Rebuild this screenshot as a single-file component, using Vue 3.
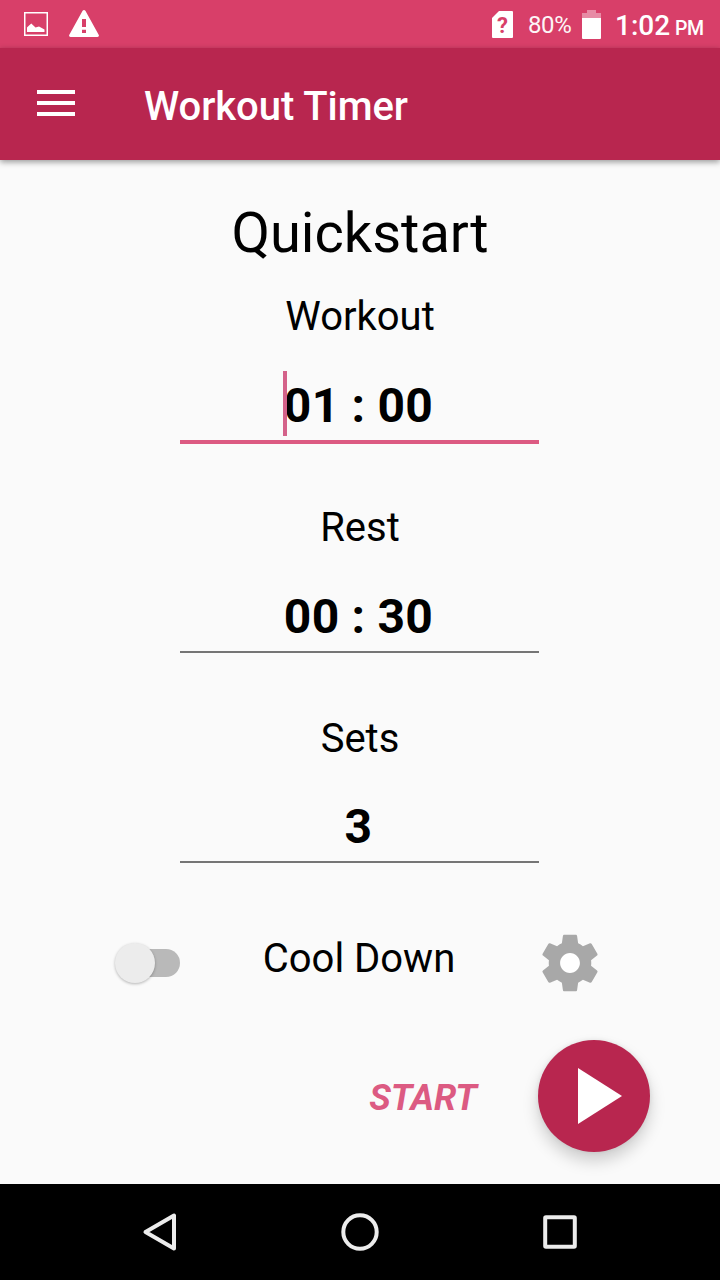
<template>
  <div class="screen">
    <header class="status">
      <svg class="st-image" viewBox="0 0 24 24">
        <rect x="0.75" y="0.75" width="22.5" height="22.5" />
        <path d="M3 20 V15.5 L4.5 14 L7.3 11.5 L11.5 15.5 L15 14.5 L20.5 17.5 V20 Z" />
      </svg>
      <svg class="st-warn" viewBox="0 0 30 27">
        <path
          d="M13.6 0.8 Q15 -0.6 16.4 0.8 L29.8 25 Q30.4 27 28.5 27 H1.5 Q-0.4 27 0.2 25 Z M13 9 V17 H17 V9 Z M13 19.8 V23 H17 V19.8 Z"
          fill-rule="evenodd"
        />
      </svg>
      <div class="st-sim">
        <svg viewBox="0 0 21 27">
          <path d="M7 0 H20 Q21 0 21 1 V26 Q21 27 20 27 H1 Q0 27 0 26 V7 Z" />
        </svg>
        <span>?</span>
      </div>
      <span class="st-pct">80%</span>
      <svg class="st-batt" viewBox="0 0 19 29">
        <path d="M5 0 H14 V3 H19 V8 H0 V3 H5 Z" opacity="0.4" />
        <path d="M0 8 H19 V28 Q19 29 18 29 H1 Q0 29 0 28 Z" />
      </svg>
      <span class="st-time">1:02</span>
      <span class="st-ampm">PM</span>
    </header>

    <nav class="appbar">
      <button class="burger" @click="menuOpen = !menuOpen">
        <i></i>
        <i></i>
        <i></i>
      </button>
      <h1>Workout Timer</h1>
    </nav>

    <main class="content">
      <h2>Quickstart</h2>

      <section
        v-for="f in fields"
        :key="f.label"
        class="field"
        :class="{ active: f.label === focused }"
        @click="focused = f.label"
      >
        <div class="label">{{ f.label }}</div>
        <div class="value">
          <span>{{ f.value }}</span>
        </div>
      </section>

      <div class="cooldown">
        <div class="switch" :class="{ on: coolDown }" @click="coolDown = !coolDown">
          <div class="track"></div>
          <div class="thumb"></div>
        </div>
        <div class="cool-label">Cool Down</div>
        <svg class="gear" viewBox="0 0 24 24">
          <circle cx="12" cy="12" r="4" fill="#fff" />
          <path
            fill="#a8a8a8"
            d="M19.43 12.98c.04-.32.07-.64.07-.98s-.03-.66-.07-.98l2.11-1.65c.19-.15.24-.42.12-.64l-2-3.46c-.12-.22-.39-.3-.61-.22l-2.49 1c-.52-.4-1.08-.73-1.69-.98l-.38-2.65C14.46 2.18 14.25 2 14 2h-4c-.25 0-.46.18-.49.42l-.38 2.65c-.61.25-1.17.59-1.69.98l-2.49-1c-.23-.09-.49 0-.61.22l-2 3.46c-.13.22-.07.49.12.64l2.11 1.65c-.04.32-.07.65-.07.98s.03.66.07.98l-2.11 1.65c-.19.15-.24.42-.12.64l2 3.46c.12.22.39.3.61.22l2.49-1c.52.4 1.08.73 1.69.98l.38 2.65c.03.24.24.42.49.42h4c.25 0 .46-.18.49-.42l.38-2.65c.61-.25 1.17-.59 1.69-.98l2.49 1c.23.09.49 0 .61-.22l2-3.46c.12-.22.07-.49-.12-.64l-2.11-1.65zM12 15.5c-1.93 0-3.5-1.57-3.5-3.5s1.57-3.5 3.5-3.5 3.5 1.57 3.5 3.5-1.57 3.5-3.5 3.5z"
          />
        </svg>
      </div>

      <div class="actions">
        <span class="start">START</span>
        <button class="fab">
          <svg viewBox="0 0 44 56">
            <path d="M0 0 L44 28 L0 56 Z" />
          </svg>
        </button>
      </div>
    </main>

    <footer class="navbar">
      <svg viewBox="0 0 40 40">
        <path d="M5.5 20 L34 3.5 V36.5 Z" />
      </svg>
      <svg viewBox="0 0 40 40">
        <circle cx="20" cy="20" r="16.7" />
      </svg>
      <svg viewBox="0 0 40 40">
        <rect x="5.2" y="5.2" width="29.6" height="29.6" rx="0.8" />
      </svg>
    </footer>
  </div>
</template>

<script setup>
import { ref } from 'vue'

const menuOpen = ref(false)
const coolDown = ref(false)
const focused = ref('Workout')

const fields = ref([
  { label: 'Workout', value: '01 : 00' },
  { label: 'Rest', value: '00 : 30' },
  { label: 'Sets', value: '3' },
])
</script>

<style>
body {
  margin: 0;
  background: #fafafa;
}
</style>

<style scoped>
.screen {
  width: 720px;
  height: 1280px;
  display: flex;
  flex-direction: column;
  overflow: hidden;
  background: #fafafa;
  color: #000;
  font-family: Roboto, 'Liberation Sans', sans-serif;
}
svg {
  display: block;
  flex: none;
}
button {
  border: 0;
  padding: 0;
  background: none;
}
.status {
  flex: none;
  height: 48px;
  box-sizing: border-box;
  padding: 0 16px 0 24px;
  display: flex;
  align-items: center;
  background: #d83f69;
  color: #fff;
  fill: #fff;
}
.st-image {
  width: 24px;
  height: 24px;
}
.st-image rect {
  fill: none;
  stroke: #fff;
  stroke-width: 1.5;
}
.st-warn {
  width: 30px;
  height: 27px;
  margin: -1px 0 0 21px;
}
.st-sim {
  position: relative;
  width: 21px;
  height: 27px;
  margin: 1px 0 0 auto;
}
.st-sim svg {
  width: 21px;
  height: 27px;
}
.st-sim span {
  position: absolute;
  inset: 1px 0 0;
  color: #d83f69;
  font-size: 22px;
  font-weight: 700;
  line-height: 27px;
  text-align: center;
}
.st-pct {
  width: 44px;
  margin-left: 15px;
  font-size: 24px;
  line-height: 28px;
  letter-spacing: -0.4px;
  margin-top: 2px;
  opacity: 0.95;
}
.st-batt {
  width: 19px;
  height: 29px;
  margin-left: 10px;
}
.st-time {
  width: 56px;
  margin-left: 14px;
  margin-top: 3px;
  font-size: 28px;
  font-weight: 500;
  line-height: 32px;
}
.st-ampm {
  width: 29px;
  margin-left: 4px;
  margin-top: 9px;
  font-size: 19.5px;
  font-weight: 500;
  line-height: 24px;
  letter-spacing: -0.4px;
}
.appbar {
  flex: none;
  position: relative;
  height: 112px;
  display: flex;
  align-items: center;
  background: #b8264f;
  box-shadow: 0 2px 6px rgba(0, 0, 0, 0.4);
}
.burger {
  width: 38px;
  margin: 0 0 2px 37px;
  display: flex;
  flex-direction: column;
  gap: 7px;
}
.burger i {
  width: 38px;
  height: 4px;
  background: #fff;
}
h1 {
  margin: 6px 0 0 69px;
  color: #fff;
  font-size: 40px;
  font-weight: 500;
  line-height: 48px;
  letter-spacing: -0.05px;
}
.content {
  flex: 1;
  padding-top: 40px;
  box-sizing: border-box;
}
h2 {
  margin: 0 0 27px;
  font-size: 56px;
  font-weight: 400;
  line-height: 66px;
  text-align: center;
}
.field {
  width: 359px;
  height: 151px;
  margin: 0 0 60px 180px;
  text-align: center;
}
.label {
  width: 360px;
  font-size: 40px;
  line-height: 48px;
}
.value {
  height: 68px;
  margin-top: 31px;
  padding-right: 2px;
  border-bottom: 2px solid #757575;
  font-size: 48px;
  font-weight: 700;
  line-height: 68px;
  letter-spacing: 0.25px;
}
.field:nth-of-type(3) .value {
  margin-top: 30px;
}
.value span {
  position: relative;
}
.active .value {
  border-bottom: 4px solid #dc5a82;
}
/* text caret in front of the first digit */
.active .value span::before {
  content: '';
  position: absolute;
  left: -1px;
  top: -6px;
  width: 4px;
  height: 65px;
  background: #d4628a;
}
.cooldown {
  height: 68px;
  margin-top: 63px;
  display: flex;
  align-items: center;
  padding-left: 115px;
}
.switch {
  position: relative;
  width: 65px;
  height: 40px;
  display: flex;
  align-items: center;
}
.track {
  width: 55px;
  height: 28px;
  margin-left: 10px;
  border-radius: 14px;
  background: #b9b9b9;
}
.thumb {
  position: absolute;
  left: 0;
  top: 0;
  width: 40px;
  height: 40px;
  border-radius: 50%;
  background: #ececec;
  box-shadow: 0 1px 3px rgba(0, 0, 0, 0.28);
}
.on .thumb {
  left: 25px;
}
.cool-label {
  width: 200px;
  margin: -9px 0 0 79px;
  font-size: 40px;
  line-height: 48px;
  text-align: center;
}
.gear {
  width: 68px;
  height: 68px;
  margin-left: 77px;
}
.actions {
  display: flex;
  align-items: center;
  justify-content: flex-end;
  padding: 43px 70px 0 0;
}
.start {
  margin: 3px 61px 0 0;
  color: #dc5a82;
  font-size: 36px;
  font-style: italic;
  font-weight: 700;
  line-height: 42px;
}
.fab {
  width: 112px;
  height: 112px;
  display: flex;
  align-items: center;
  padding-left: 40px;
  border-radius: 50%;
  background: #b8264f;
  box-shadow:
    0 9px 16px rgba(0, 0, 0, 0.18),
    0 0 5px rgba(0, 0, 0, 0.08);
}
.fab svg {
  width: 44px;
  height: 56px;
  fill: #fff;
}
.navbar {
  flex: none;
  height: 96px;
  display: flex;
  align-items: center;
  justify-content: center;
  gap: 160px;
  background: #000;
}
.navbar svg {
  width: 40px;
  height: 40px;
  fill: none;
  stroke: #ececec;
  stroke-width: 4;
  stroke-linejoin: round;
}
</style>
